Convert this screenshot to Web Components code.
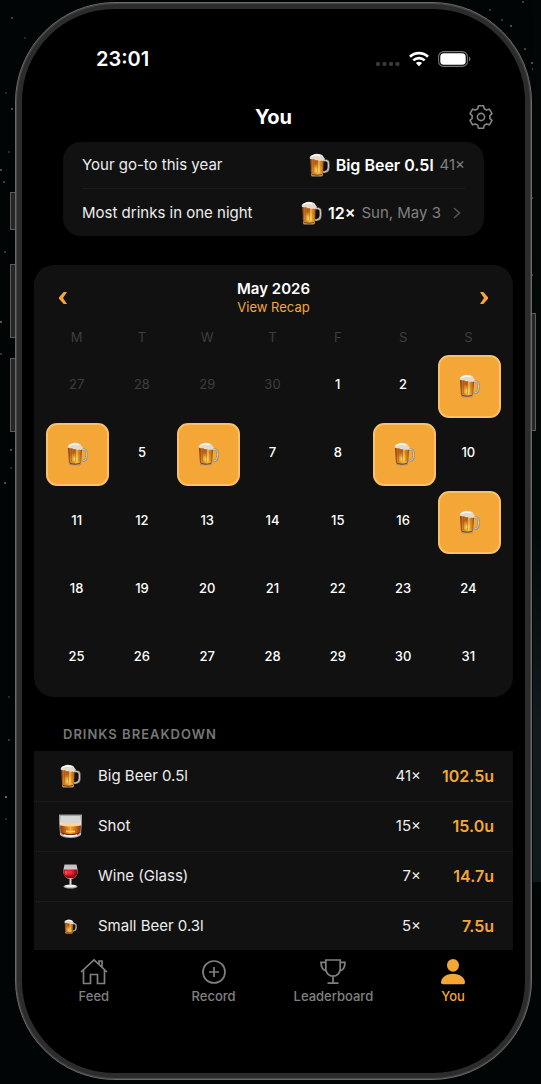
<!DOCTYPE html>
<html lang="en">
<head>
<meta charset="utf-8">
<meta name="viewport" content="width=device-width, initial-scale=1">
<title>You</title>
<style>
  :root { --accent: #f4a636; --card: #111; --line: #1b1b1b; --text: #ededed; --muted: #808080; --faint: #3e3e3e; }
  body { margin: 0; background: #020506; color: var(--text); font-family: Inter, "Liberation Sans", sans-serif; }
</style>
</head>
<body>
<star-field>
  <phone-frame>
    <status-bar slot="top" time="23:01"></status-bar>
    <screen-header slot="top">You</screen-header>
    <stats-card>
      <stat-row label="Your go-to this year"><drink-icon kind="beer"></drink-icon><b>Big Beer 0.5l</b><span>41×</span></stat-row>
      <stat-row label="Most drinks in one night" more><drink-icon kind="beer"></drink-icon><b>12×</b><span>Sun, May 3</span></stat-row>
    </stats-card>
    <month-calendar></month-calendar>
    <drinks-breakdown></drinks-breakdown>
    <tab-bar slot="bottom"></tab-bar>
  </phone-frame>
</star-field>

<script>
const define = (name, html, setup) => {
  const template = document.createElement('template');
  template.innerHTML = html;
  customElements.define(name, class extends HTMLElement {
    constructor() {
      super();
      this.attachShadow({ mode: 'open' }).append(template.content.cloneNode(true));
    }
    connectedCallback() { if (setup) setup(this, this.shadowRoot); }
  });
};

/* Night sky behind the phone */
define('star-field', `
<style>
  :host { display: block; position: relative; isolation: isolate; min-height: 100vh; box-sizing: border-box; padding: 2px 9px 4px 15px; }
  .sky { position: absolute; inset: 0; z-index: -1; overflow: hidden; }
  .sky svg { width: 100%; height: 100%; display: block; }
  .glow { position: absolute; right: 0; top: 0; width: 8px; height: 882px; background: linear-gradient(#030607, #04090a 60%, #14191d 82%, #101a1c); }
</style>
<div class="sky" aria-hidden="true"><div class="glow"></div><svg></svg></div>
<slot></slot>`, (host, root) => {
  const stars = [[12,18,.5],[25,38,.3],[6,93,.3],[12,109,.6],[9,152,.3],[1,170,.6],[4,182,.5],[5,252,.4],[1,322,.7],[1,354,.4],[11,450,.6],[11,468,.3],[5,483,.6],[9,697,.3],[9,740,.4],[6,797,.8],[6,819,.3],
    [523,2,.5],[490,10,.4],[502,20,.4],[511,26,.6],[509,40,.3],[525,49,.5],[532,63,.6],[533,69,.5],[539,73,.5],[538,100,.3],[533,198,.5],[537,207,.3],[537,274,.6],[533,275,.5],[537,297,.4],[538,319,.6],[539,365,.3],[539,467,.3],[539,476,.4],[538,704,.4],[539,727,.6],[539,745,.5],[538,772,.3],[535,871,.4]];
  root.querySelector('svg').innerHTML = stars.map(([x, y, o]) => `<circle cx="${x}" cy="${y}" r="1" fill="#9aa5a8" opacity="${o}"/>`).join('');
});

define('phone-frame', `
<style>
  :host { display: block; position: relative; height: calc(100vh - 6px); }
  .key { position: absolute; z-index: -1; width: 6px; box-sizing: border-box; background: #262626; border: 1px solid #5c5c5c; }
  .left { left: -5px; } .right { right: -4px; }
  .action { top: 190px; height: 38px; } .up { top: 262px; height: 74px; } .down { top: 356px; height: 74px; } .power { top: 311px; height: 118px; }
  .bezel { box-sizing: border-box; height: 100%; padding: 6px; border: 1px solid #6a6a6a; border-radius: 100px; background: #2c2c2c; box-shadow: inset 0 0 0 1px #484848; }
  .screen { box-sizing: border-box; height: 100%; display: flex; flex-direction: column; padding: 1px 12px; border-radius: 92px; background: #000; overflow: hidden; }
  main { flex: 1; min-height: 0; overflow-y: auto; scrollbar-width: none; }
</style>
<i class="key left action"></i><i class="key left up"></i><i class="key left down"></i><i class="key right power"></i>
<div class="bezel"><div class="screen">
  <slot name="top"></slot>
  <main><slot></slot></main>
  <slot name="bottom"></slot>
</div></div>`);

define('status-bar', `
<style>
  :host { display: flex; flex: none; box-sizing: border-box; height: 82px; padding: 16px 42px 0 62px; align-items: center; justify-content: space-between; color: #fff; }
  time { font-size: 20px; font-weight: 600; line-height: 24px; }
  .signs { display: flex; align-items: center; gap: 9px; }
  svg { display: block; }
</style>
<time></time>
<div class="signs">
  <svg width="24" height="16" viewBox="0 0 24 16" fill="#3a3a3a"><rect y="11" width="4" height="4" rx="1.4"/><rect x="6.5" y="11" width="4" height="4" rx="1.4"/><rect x="13" y="11" width="4" height="4" rx="1.4"/><rect x="19.5" y="11" width="4" height="4" rx="1.4"/></svg>
  <svg width="20" height="16" viewBox="0 0 20 16" fill="none" stroke="#fff" stroke-width="2.7"><path d="M1 5.7a13 13 0 0 1 18 0M4.3 9.4a8.2 8.2 0 0 1 11.4 0"/><path d="M6.9 12.1a4.6 4.6 0 0 1 6.2 0L10 15.3z" fill="#fff" stroke="none"/></svg>
  <svg width="33" height="16" viewBox="0 0 33 16"><rect x=".6" y=".6" width="28.8" height="14.8" rx="5" fill="none" stroke="#777" stroke-width="1.1"/><rect x="2.3" y="2.3" width="25.4" height="11.4" rx="3.5" fill="#fff"/><path d="M31 5.5c1.8.7 1.8 4.3 0 5z" fill="#777"/></svg>
</div>`, (host, root) => { root.querySelector('time').textContent = host.getAttribute('time'); });

define('screen-header', `
<style>
  :host { display: grid; flex: none; grid-template-columns: 44px 1fr 44px; align-items: center; height: 50px; padding: 0 10px; }
  h1 { grid-column: 2; margin: 0; text-align: center; font-size: 20px; line-height: 24px; font-weight: 700; color: #fff; }
  button { display: grid; place-items: center; width: 44px; height: 44px; padding: 0; border: 0; background: none; cursor: pointer; }
</style>
<h1><slot></slot></h1>
<button type="button" aria-label="Settings"><svg width="26" height="26" viewBox="-13 -13 26 26" fill="none" stroke="#858585" stroke-width="1.6" stroke-linejoin="round"><path/><circle r="3.6"/></svg></button>`, (host, root) => {
  // Gear outline: six teeth, joined by shallow arcs
  const turn = (x, y, degrees) => {
    const a = degrees * Math.PI / 180;
    return `${(x * Math.cos(a) - y * Math.sin(a)).toFixed(2)} ${(x * Math.sin(a) + y * Math.cos(a)).toFixed(2)}`;
  };
  let d = '';
  for (let tooth = 0; tooth < 360; tooth += 60) {
    d += (d ? `A8.7 8.7 0 0 1 ${turn(-3.2, -8.3, tooth)}` : `M${turn(-3.2, -8.3, 0)}`)
      + `L${turn(-2.6, -11.2, tooth)}L${turn(2.6, -11.2, tooth)}L${turn(3.2, -8.3, tooth)}`;
  }
  root.querySelector('path').setAttribute('d', d + `A8.7 8.7 0 0 1 ${turn(-3.2, -8.3, 0)}Z`);
});

const DRINKS = {
  beer: `<defs>
    <linearGradient id="b" x1="0" x2="1"><stop offset="0" stop-color="#6b2f10"/><stop offset=".2" stop-color="#cf7520"/><stop offset=".45" stop-color="#ab5518"/><stop offset=".62" stop-color="#f2ac36"/><stop offset=".85" stop-color="#d98324"/><stop offset="1" stop-color="#65300f"/></linearGradient>
    <radialGradient id="g" cx=".5" cy=".68" r=".42"><stop offset="0" stop-color="#ffe76a"/><stop offset="1" stop-color="#ffb52c" stop-opacity="0"/></radialGradient></defs>
    <path d="M29 14h5q5 0 5 6v8q0 8-8 9h-4" fill="none" stroke="#948b7e" stroke-width="4.4"/><path d="M29 14h5q5 0 5 6v8q0 8-8 9h-4" fill="none" stroke="#d0c9bc" stroke-width="2"/>
    <path d="M2 9l2 33q0 3 3 3h18q3 0 3-3l2-31z" fill="url(#b)"/><path d="M2 9l2 33q0 3 3 3h18q3 0 3-3l2-31z" fill="url(#g)"/>
    <path d="M9 13v25M17 13v25M24 14v23" stroke="#803b12" stroke-width="1.3" opacity=".5"/>
    <path d="M4 41q12 4 24 0l-.5 2q-.5 3-3 3h-17q-3 0-3-3z" fill="#b89a7a"/><path d="M6 42q10 3 20 0" stroke="#7b3d18" stroke-width="2" fill="none"/>
    <path d="M1 9q1-5 7-6 4-4 12-2 8 1 9 6 4 2 2 6-3 3-6 1-4 2-7-1-5 2-8-2-7 2-9-2z" fill="#e2d9cf"/><path d="M5 6q8-5 17-2" stroke="#fbf8f2" stroke-width="3" fill="none" stroke-linecap="round"/>`,
  shot: `<defs><linearGradient id="g" x2="0" y2="1"><stop offset="0" stop-color="#999"/><stop offset=".4" stop-color="#eee"/><stop offset="1" stop-color="#aaa"/></linearGradient>
    <linearGradient id="w" x1="0" x2="1"><stop offset="0" stop-color="#8b330b"/><stop offset=".5" stop-color="#ffa32b"/><stop offset="1" stop-color="#8b330b"/></linearGradient></defs>
    <path d="M0 1h46l-2 41q-6 6-21 6T2 42z" fill="url(#g)"/><path d="M3 4h40l-1 15H4z" fill="#d6d6d6"/>
    <path d="M2 21h42l-1 17q-8 5-20 5T3 38z" fill="url(#w)"/><path d="M2 20q21-5 42 0v3q-21 4-42 0z" fill="#ffd591"/>
    <path d="M5 37q18 6 36 0l-4 5H9z" fill="#6a210a"/><path d="M9 42q14 4 28 0" stroke="#fff" stroke-width="3" fill="none"/><path d="M14 35h18" stroke="#ffdc6c" stroke-width="3"/>`,
  wine: `<defs><linearGradient id="g" x2="0" y2="1"><stop offset="0" stop-color="#bbb"/><stop offset="1" stop-color="#f4f4f4"/></linearGradient>
    <radialGradient id="w" cx=".4" cy=".3"><stop offset="0" stop-color="#fa3e42"/><stop offset=".6" stop-color="#d81c28"/><stop offset="1" stop-color="#8d0c16"/></radialGradient></defs>
    <path d="M3 1h24q3 11 2 17-2 11-14 12Q3 29 1 18 0 12 3 1z" fill="url(#g)"/><path d="M2 11h26q2 7 0 11-4 7-13 7T2 22q-2-5 0-11z" fill="url(#w)"/>
    <path d="M13 29h4v13h-4z" fill="#d5d5d5"/><ellipse cx="15" cy="45" rx="14" ry="4" fill="#aaa"/><ellipse cx="15" cy="44" rx="11" ry="2.5" fill="#eee"/><path d="M6 14v7" stroke="#ff7b7b" stroke-width="2"/>`
};
const SIZES = { beer: [21, 24, '0 -1 42 48'], shot: [23, 25, '0 0 46 50'], wine: [15, 25, '0 0 30 50'] };

define('drink-icon', `<style>:host { display: inline-block; flex: none; } svg { display: block; }</style><svg aria-hidden="true"></svg>`, (host, root) => {
  const kind = host.getAttribute('kind');
  const [width, height, box] = SIZES[kind];
  const ratio = host.hasAttribute('small') ? .64 : 1;
  const svg = root.querySelector('svg');
  svg.setAttribute('width', Math.round(width * ratio));
  svg.setAttribute('height', Math.round(height * ratio));
  svg.setAttribute('viewBox', box);
  svg.innerHTML = DRINKS[kind];
});

define('stats-card', `
<style>:host { display: block; margin: 0 29px 29px; padding: 0 19px; border-radius: 18px; background: var(--card); }</style>
<slot></slot>`);

define('stat-row', `
<style>
  :host { display: flex; box-sizing: border-box; height: 47px; align-items: center; justify-content: space-between; border-bottom: 1px solid var(--line); font-size: 15px; line-height: 20px; white-space: nowrap; }
  :host(:last-child) { border-bottom: 0; }
  .value { display: flex; align-items: center; gap: 6px; }
  ::slotted(b) { font-size: 16px; font-weight: 600; color: #fff; }
  ::slotted(span) { color: var(--muted); }
  svg { display: none; margin: 0 4px 0 6px; }
  :host([more]) svg { display: block; }
</style>
<span class="label"></span>
<span class="value"><slot></slot><svg width="8" height="12" viewBox="0 0 8 12" fill="none" stroke="#555" stroke-width="1.5"><path d="M1 1l5.5 5L1 11"/></svg></span>`,
(host, root) => { root.querySelector('.label').textContent = host.getAttribute('label'); });

define('month-calendar', `
<style>
  :host { display: block; padding: 15px 11px 5px; border-radius: 20px; background: var(--card); }
  header { display: flex; justify-content: space-between; align-items: center; }
  .title { text-align: center; }
  h2 { margin: 0; font-size: 15px; line-height: 18px; font-weight: 600; color: #fff; }
  a { display: block; font-size: 13px; line-height: 18px; color: var(--accent); text-decoration: none; }
  button { display: grid; place-items: center; padding: 0; border: 0; background: none; cursor: pointer; }
  header button { width: 36px; height: 36px; }
  table { width: 100%; table-layout: fixed; border-collapse: collapse; font-size: 13px; line-height: 18px; }
  th { box-sizing: border-box; height: 36px; padding: 6px 2px 0 0; font-weight: 400; color: var(--faint); }
  td { box-sizing: border-box; height: 68px; padding: 0 2px 4px 0; text-align: center; font-weight: 500; color: #fff; }
  td.outside { font-weight: 400; color: var(--faint); }
  td.drank { padding: 0; }
  td button { box-sizing: border-box; width: 63px; height: 63px; margin: 0 auto; border: 2px solid #fac06a; border-radius: 11px; background: var(--accent); }
</style>
<header>
  <button type="button" aria-label="Previous month"><svg width="8" height="12" viewBox="0 0 8 12" fill="#f4a636"><path d="M4.7 0H8L4 6l4 6H4.7L0 6.8V5.2z"/></svg></button>
  <div class="title"><h2>May 2026</h2><a href="#recap">View Recap</a></div>
  <button type="button" aria-label="Next month"><svg width="8" height="12" viewBox="0 0 8 12" fill="#f4a636"><path d="M3.3 0H0l4 6-4 6h3.3L8 6.8V5.2z"/></svg></button>
</header>
<table><thead><tr><th>M</th><th>T</th><th>W</th><th>T</th><th>F</th><th>S</th><th>S</th></tr></thead><tbody></tbody></table>`, (host, root) => {
  const drank = [3, 4, 6, 9, 17];
  const cell = index => {
    const day = index - 3;
    if (day < 1) return `<td class="outside">${day + 30}</td>`;
    if (drank.includes(day)) return `<td class="drank"><button type="button" aria-label="May ${day}"><drink-icon kind="beer"></drink-icon></button></td>`;
    return `<td>${day}</td>`;
  };
  root.querySelector('tbody').innerHTML = [0, 1, 2, 3, 4].map(week =>
    `<tr>${[0, 1, 2, 3, 4, 5, 6].map(d => cell(week * 7 + d)).join('')}</tr>`).join('');
});

define('drinks-breakdown', `
<style>
  :host { display: block; }
  h2 { margin: 0; padding: 27px 29px 7px; font-size: 13px; line-height: 20px; font-weight: 600; letter-spacing: 1px; text-transform: uppercase; color: #777; }
  table { width: 100%; border-collapse: collapse; background: var(--card); font-size: 15px; line-height: 20px; }
  td { box-sizing: border-box; height: 50px; padding: 0; border-bottom: 1px solid var(--line); }
  .icon { width: 64px; padding-left: 8px; text-align: center; }
  .icon drink-icon { vertical-align: middle; }
  .count, .units { text-align: right; }
  .units { width: 92px; padding-right: 19px; font-size: 16px; font-weight: 600; color: var(--accent); }
</style>
<h2>Drinks Breakdown</h2>
<table><tbody></tbody></table>`, (host, root) => {
  root.querySelector('tbody').innerHTML = [
    ['kind="beer"', 'Big Beer 0.5l', 41, '102.5'],
    ['kind="shot"', 'Shot', 15, '15.0'],
    ['kind="wine"', 'Wine (Glass)', 7, '14.7'],
    ['kind="beer" small', 'Small Beer 0.3l', 5, '7.5']
  ].map(([icon, name, count, units]) => `<tr><td class="icon"><drink-icon ${icon}></drink-icon></td><td>${name}</td><td class="count">${count}×</td><td class="units">${units}u</td></tr>`).join('');
});

define('tab-bar', `
<style>
  :host { display: block; flex: none; height: 122px; }
  nav { display: grid; grid-template-columns: repeat(4, 1fr); padding-top: 8px; }
  a { display: flex; flex-direction: column; align-items: center; font-size: 13px; line-height: 20px; font-weight: 500; color: var(--muted); text-decoration: none; }
  a[aria-current] { color: var(--accent); }
  svg { display: block; fill: none; stroke: currentColor; stroke-width: 1.7; }
</style>
<nav>
  <a href="#feed"><svg width="28" height="28" viewBox="0 0 28 28"><path d="M1 14L14 2l13 12M3.5 12v13.5h7V16.5h7v9h7V12M19 6.5V3h3v6.2"/></svg>Feed</a>
  <a href="#record"><svg width="28" height="28" viewBox="0 0 28 28"><circle cx="14" cy="14" r="11"/><path d="M14 9v10M9 14h10"/></svg>Record</a>
  <a href="#leaderboard"><svg width="28" height="28" viewBox="0 0 28 28"><path d="M6.8 2h14.4v9c0 4-3.2 7.2-7.2 7.2S6.8 15 6.8 11zM6.8 4.3H2c0 5 1.5 7.7 5.2 8.7M21.2 4.3H26c0 5-1.5 7.7-5.2 8.7M14 18.2v7M8.5 25.2h11"/></svg>Leaderboard</a>
  <a href="#you" aria-current="page"><svg width="28" height="28" viewBox="0 0 28 28" style="fill:currentColor;stroke:none"><ellipse cx="14" cy="7.3" rx="6" ry="6.4"/><path d="M2 24.5C2 20 7 15.8 14 15.8S26 20 26 24.5q0 1.700-1.8 1.7H3.8Q2 26.2 2 24.5z"/></svg>You</a>
</nav>`);
</script>
</body>
</html>
